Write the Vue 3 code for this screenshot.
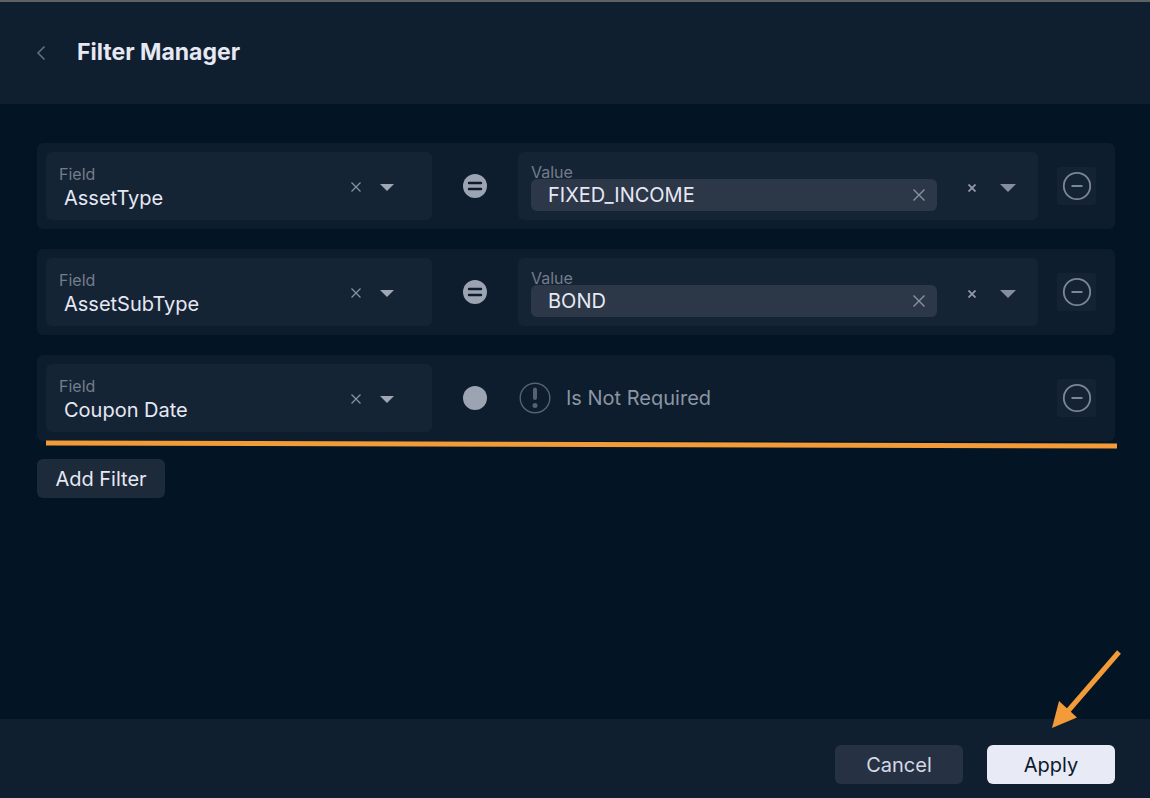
<script setup>
import { ref } from 'vue'

const fieldNames = ['AssetType', 'AssetSubType', 'Coupon Date']
const filters = ref([
  { id: 1, field: 'AssetType', value: 'FIXED_INCOME' },
  { id: 2, field: 'AssetSubType', value: 'BOND' },
  { id: 3, field: 'Coupon Date', value: null },
])

const removeFilter = (id) => {
  filters.value = filters.value.filter((f) => f.id !== id)
}
const addFilter = () => {
  filters.value.push({ id: Date.now(), field: 'AssetType', value: null })
}
</script>

<template>
  <div class="page">
    <header class="header">
      <button class="icon-btn back" type="button" aria-label="Back">
        <svg width="10" height="16" viewBox="0 0 10 16"><path d="M8.500 1.500 2 8l6.500 6.500" fill="none" stroke="currentColor" stroke-width="1.500" /></svg>
      </button>
      <h1 class="title">Filter Manager</h1>
    </header>

    <main class="content">
      <div class="list">
        <section v-for="f in filters" :key="f.id" class="row">
          <div class="field">
            <div class="field-main">
              <label class="label" :for="'field-' + f.id">Field</label>
              <select :id="'field-' + f.id" v-model="f.field" class="select">
                <option v-for="n in fieldNames" :key="n">{{ n }}</option>
              </select>
            </div>
            <button class="icon-btn clear" type="button" aria-label="Clear field">
              <svg width="10" height="10" viewBox="0 0 10 10"><path d="M.5.5l9 9M9.500.5l-9 9" stroke="currentColor" stroke-width="1.200" /></svg>
            </button>
            <svg class="caret" width="14" height="7" viewBox="0 0 14 7"><path d="M0 0h14L7 7z" fill="currentColor" /></svg>
          </div>

          <button class="icon-btn operator" type="button" :aria-label="f.value ? 'Equals' : 'Is not required'">
            <svg width="24" height="24" viewBox="0 0 24 24">
              <circle cx="12" cy="12" r="12" fill="currentColor" />
              <path v-if="f.value" d="M6 9h12M6 15h12" stroke="#0e1d2d" stroke-width="2.400" stroke-linecap="round" />
            </svg>
          </button>

          <div v-if="f.value" class="value">
            <div class="value-main">
              <span class="label">Value</span>
              <div class="chip">
                <span>{{ f.value }}</span>
                <button class="icon-btn chip-remove" type="button" :aria-label="'Remove ' + f.value">
                  <svg width="12" height="12" viewBox="0 0 12 12"><path d="M.5.5l11 11M11.500.5l-11 11" stroke="currentColor" stroke-width="1.400" /></svg>
                </button>
              </div>
            </div>
            <button class="icon-btn value-clear" type="button" aria-label="Clear value">
              <svg width="8" height="8" viewBox="0 0 8 8"><path d="M.5.5l7 7M7.500.5l-7 7" stroke="currentColor" stroke-width="1.800" /></svg>
            </button>
            <button class="icon-btn value-open" type="button" aria-label="Open values">
              <svg width="16" height="8" viewBox="0 0 16 8"><path d="M0 0h16L8 8z" fill="currentColor" /></svg>
            </button>
          </div>
          <div v-else class="notice">
            <svg width="32" height="32" viewBox="0 0 32 32">
              <circle cx="16" cy="16" r="14.800" fill="none" stroke="currentColor" stroke-width="1.400" />
              <path d="M16 7.500v8.500" stroke="currentColor" stroke-width="4" stroke-linecap="round" />
              <circle cx="16" cy="23.500" r="2.500" fill="currentColor" />
            </svg>
            <span>Is Not Required</span>
          </div>

          <button class="remove" type="button" aria-label="Remove filter" @click="removeFilter(f.id)">
            <svg width="30" height="30" viewBox="0 0 30 30">
              <circle cx="15" cy="15" r="13.200" fill="none" stroke="currentColor" stroke-width="1.800" />
              <path d="M9.500 15h11" stroke="currentColor" stroke-width="2" />
            </svg>
          </button>
        </section>
        <svg class="underline" viewBox="0 0 1071 10" preserveAspectRatio="none"><path d="M0 3 1071 6" stroke="#f29b38" stroke-width="5" /></svg>
      </div>
      <button class="btn add" type="button" @click="addFilter">Add Filter</button>
    </main>

    <footer class="footer">
      <button class="btn cancel" type="button">Cancel</button>
      <div class="apply-wrap">
        <button class="btn apply" type="button">Apply</button>
        <svg class="arrow" width="70" height="80" viewBox="0 0 70 80">
          <path d="M67 3 16 62" stroke="#f29b38" stroke-width="5" />
          <path d="M0 79 7 52 25 68.500z" fill="#f29b38" />
        </svg>
      </div>
    </footer>
  </div>
</template>

<style>
body {
  margin: 0;
  background: #031425;
}
</style>

<style scoped>
* {
  box-sizing: border-box;
}
.page {
  display: flex;
  flex-direction: column;
  min-height: 100vh;
  background: #031425;
  color: #e6e8f4;
  font-family: Inter, "Liberation Sans", sans-serif;
  font-size: 20px;
  line-height: 24px;
}
button,
select {
  font: inherit;
  color: inherit;
  border: 0;
  margin: 0;
  padding: 0;
  background: none;
}
svg {
  display: block;
  flex: none;
}
.header {
  display: flex;
  align-items: center;
  gap: 31px;
  height: 104px;
  padding: 0 36px;
  border-top: 2px solid #5f6163;
  background: #0f1f2f;
}
.icon-btn {
  display: flex;
  align-items: center;
  justify-content: center;
  flex: none;
}
.back {
  color: #667180;
}
.title {
  margin: 0;
  padding-bottom: 2px;
  font-size: 23px;
  line-height: 28px;
  font-weight: 700;
}
.content {
  flex: 1;
  padding: 39px 35px 39px 37px;
}
.list {
  position: relative;
  display: flex;
  flex-direction: column;
  gap: 20px;
}
.row {
  display: grid;
  grid-template-columns: minmax(0, 386fr) 86px minmax(0, 520fr) 58px;
  align-items: center;
  height: 86px;
  padding: 9px 19px 9px 9px;
  border-radius: 6px;
  background: #0d1d2d;
}
.field,
.value {
  display: flex;
  align-items: center;
  height: 68px;
  border-radius: 6px;
  background: #152434;
}
.field {
  padding: 2px 38px 0 13px;
}
.field-main {
  flex: 1;
  display: flex;
  flex-direction: column;
}
.label {
  color: #737d8c;
  font-size: 16px;
  line-height: 22px;
}
.select {
  width: 100%;
  height: 26px;
  padding-left: 5px;
  appearance: none;
}
.clear {
  color: #8a93a1;
}
.caret {
  margin-left: 19px;
  color: #a0a7b4;
}
.operator {
  justify-self: center;
  color: #9ca4b1;
}
.value {
  padding: 0 22px 0 13px;
}
.value-main {
  flex: 1;
  display: flex;
  flex-direction: column;
}
.value .label {
  padding-top: 4px;
  line-height: 14px;
}
.chip {
  display: flex;
  align-items: center;
  justify-content: space-between;
  height: 32px;
  padding: 0 12px 0 17px;
  border-radius: 6px;
  background: #2c3748;
}
.chip-remove {
  color: #8a92a0;
}
.value-clear,
.value-open {
  padding-top: 4px;
}
.value-clear {
  margin-left: 31px;
  color: #9299a6;
}
.value-open {
  margin-left: 24px;
  color: #868e9c;
}
.notice {
  display: flex;
  align-items: center;
  gap: 15px;
  padding-left: 1px;
  color: #8c95a3;
}
.notice svg {
  color: #566171;
}
.remove {
  display: flex;
  align-items: center;
  justify-content: center;
  justify-self: end;
  width: 39px;
  height: 38px;
  border-radius: 3px;
  background: #142333;
  color: #7d8694;
}
.underline {
  position: absolute;
  left: 9px;
  bottom: -9px;
  width: calc(100% - 7px);
  height: 10px;
}
.btn {
  min-width: 128px;
  height: 39px;
  border-radius: 6px;
}
.add {
  margin-top: 18px;
  background: #1c2a3a;
}
.footer {
  display: flex;
  justify-content: flex-end;
  gap: 24px;
  padding: 26px 35px 14px;
  background: #0f1f2f;
}
.cancel {
  background: #263243;
  color: #d5d9e5;
}
.apply-wrap {
  position: relative;
}
.apply {
  background: #e8eaf6;
  color: #0a1a2c;
}
.arrow {
  position: absolute;
  right: -7px;
  bottom: 55px;
}
</style>
